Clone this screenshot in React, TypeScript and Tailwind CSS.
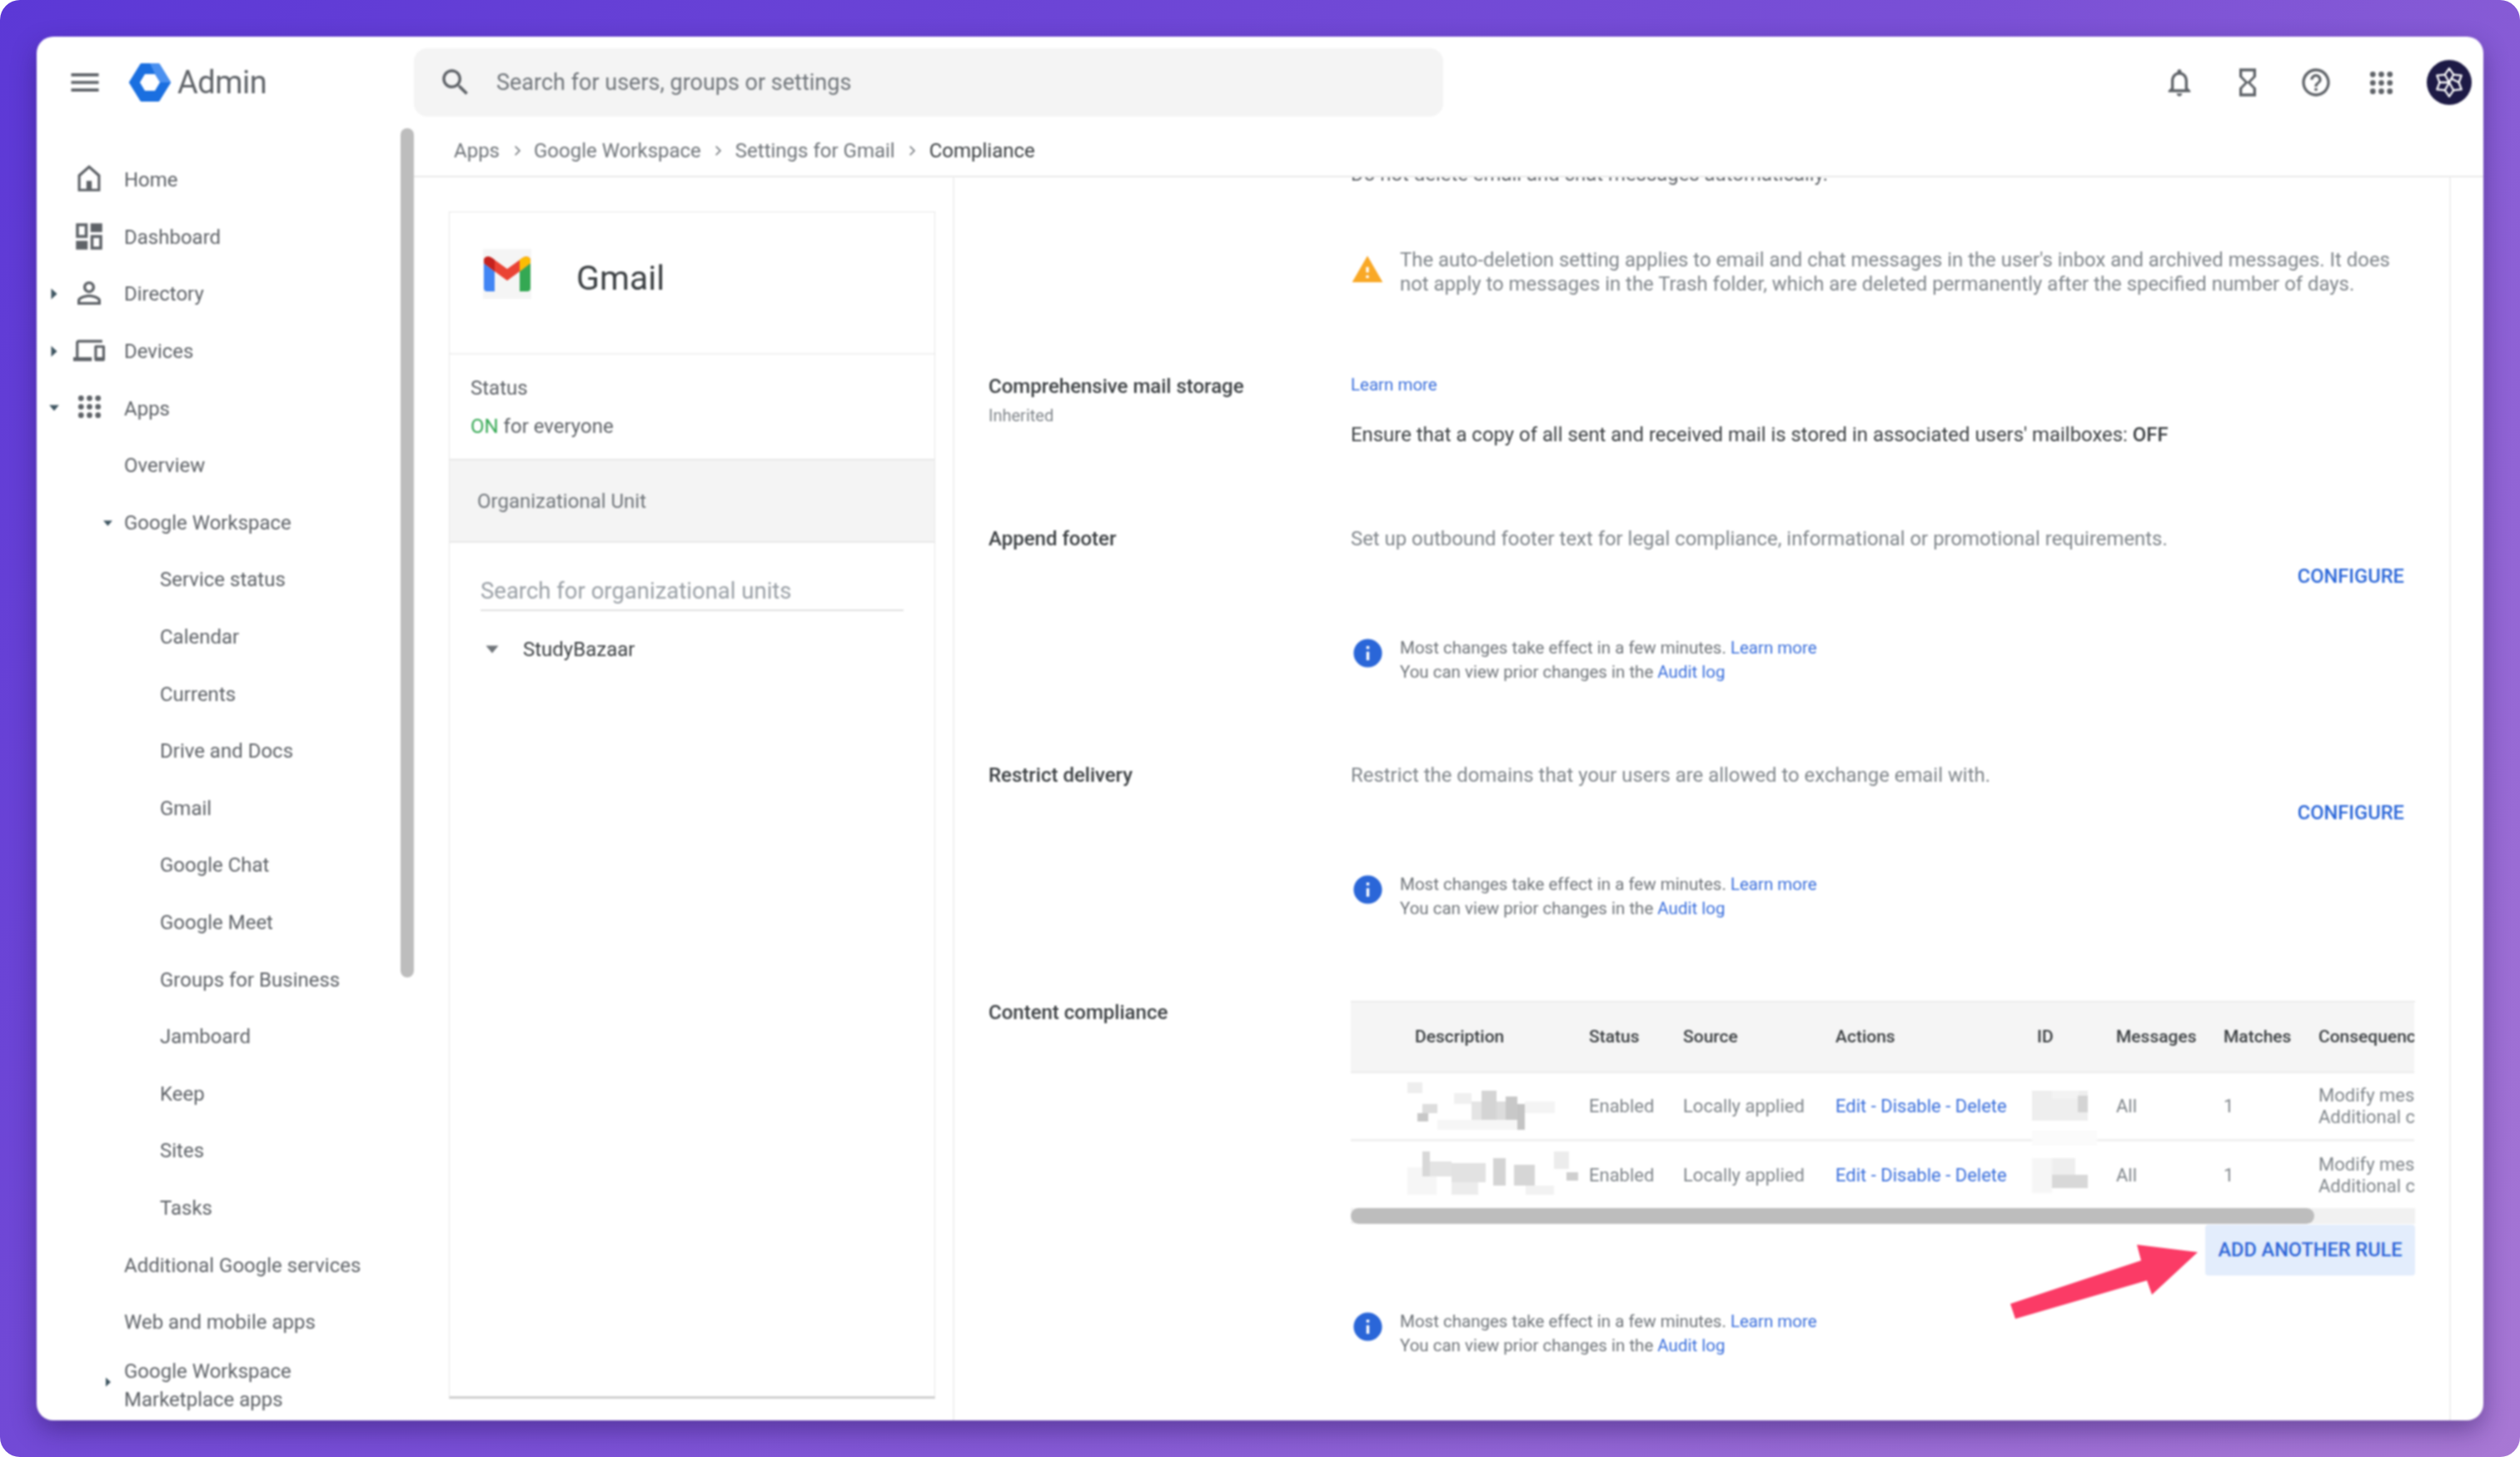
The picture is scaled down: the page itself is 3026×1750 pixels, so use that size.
import React from 'react';

const icons: Record<string, string> = {
  menu: 'M3 18h18v-2H3v2zm0-5h18v-2H3v2zm0-7v2h18V6H3z',
  search: 'M15.5 14h-.79l-.28-.27C15.41 12.59 16 11.11 16 9.5 16 5.91 13.09 3 9.5 3S3 5.91 3 9.5 5.91 16 9.5 16c1.61 0 3.09-.59 4.23-1.57l.27.28v.79l5 4.99L20.49 19l-4.99-5zm-6 0C7.01 14 5 11.99 5 9.5S7.01 5 9.5 5 14 7.01 14 9.5 11.99 14 9.5 14z',
  bell: 'M12 22c1.1 0 2-.9 2-2h-4c0 1.1.9 2 2 2zm6-6v-5c0-3.07-1.63-5.64-4.5-6.32V4c0-.83-.67-1.5-1.5-1.5s-1.5.67-1.5 1.5v.68C7.64 5.36 6 7.92 6 11v5l-2 2v1h16v-1l-2-2zm-2 1H8v-6c0-2.48 1.51-4.5 4-4.5s4 2.02 4 4.5v6z',
  hourglass: 'M6 2v6h.01L6 8.01 10 12l-4 4 .01.01H6V22h12v-5.99h-.01L18 16l-4-4 4-3.99-.01-.01H18V2H6zm10 14.5V20H8v-3.5l4-4 4 4zm-4-5l-4-4V4h8v3.5l-4 4z',
  help: 'M11 18h2v-2h-2v2zm1-16C6.48 2 2 6.48 2 12s4.48 10 10 10 10-4.48 10-10S17.52 2 12 2zm0 18c-4.41 0-8-3.59-8-8s3.59-8 8-8 8 3.59 8 8-3.59 8-8 8zm0-14c-2.21 0-4 1.79-4 4h2c0-1.1.9-2 2-2s2 .9 2 2c0 2-3 1.75-3 5h2c0-2.25 3-2.5 3-5 0-2.21-1.79-4-4-4z',
  home: 'M12 2L3.5 9.5V22h17V9.5L12 2zM12 4.8l6.5 5.7V20h-13v-9.5L12 4.8zM10 14h4v6h-4z',
  dashboard: 'M13 3h8v6h-8zM3 15h8v6H3zM11 3H3v10h8V3zM9 5v6H5V5h4zM21 11h-8v10h8V11zM19 13v6h-4v-6h4z',
  person: 'M12 5.9c1.16 0 2.1.94 2.1 2.1s-.94 2.1-2.1 2.1S9.9 9.16 9.9 8s.94-2.1 2.1-2.1m0 9c2.97 0 6.1 1.46 6.1 2.1v1.1H5.9V17c0-.64 3.13-2.1 6.1-2.1M12 4C9.79 4 8 5.79 8 8s1.79 4 4 4 4-1.79 4-4-1.79-4-4-4zm0 9c-2.67 0-8 1.34-8 4v3h16v-3c0-2.66-5.33-4-8-4z',
  devices: 'M4 6h18V4H4c-1.1 0-2 .9-2 2v11H0v3h14v-3H4V6zm19 2h-6c-.55 0-1 .45-1 1v10c0 .55.45 1 1 1h6c.55 0 1-.45 1-1V9c0-.55-.45-1-1-1zm-1 9h-4v-7h4v7z',
  warning: 'M1 21h22L12 2 1 21zm12-3h-2v-2h2v2zm0-4h-2v-4h2v4z',
  info: 'M12 2C6.48 2 2 6.48 2 12s4.48 10 10 10 10-4.48 10-10S17.52 2 12 2zm1 15h-2v-6h2v6zm0-8h-2V7h2v2z',
};

function Icon({ name, className }: { name: string; className?: string }) {
  return (
    <svg viewBox="0 0 24 24" className={className} fill="currentColor" fillRule="evenodd">
      <path d={icons[name]} />
    </svg>
  );
}

function DotsIcon({ className }: { className?: string }) {
  const spots = [5, 12, 19];
  return (
    <svg viewBox="0 0 24 24" className={className} fill="currentColor">
      {spots.map((y) => spots.map((x) => <circle key={`${x}-${y}`} cx={x} cy={y} r="2.3" />))}
    </svg>
  );
}

function AdminLogo() {
  return (
    <svg viewBox="0 0 50 48" className="h-[48px] w-[50px] shrink-0">
      <path d="M15 3h20l13 21-13 21H15L2 24z" fill="#1a6fe0" stroke="#1a6fe0" strokeWidth="4" strokeLinejoin="round" />
      <path d="M25 1h10c1 0 2 1 2.5 2L49 22c.5 1 .5 3 0 2H36z" fill="#4a90f0" />
      <path d="M19 14h12l6 10-6 10H19l-6-10z" fill="#fff" />
    </svg>
  );
}

function GmailLogo() {
  return (
    <div className="flex h-[60px] w-[58px] shrink-0 items-center justify-center bg-[#f5f5f5]">
      <svg viewBox="0 0 56 42" className="h-[42px] w-[56px]">
        <path d="M0 8l13 10v24H4a4 4 0 0 1-4-4z" fill="#4285f4" />
        <path d="M56 8L43 18v24h9a4 4 0 0 0 4-4z" fill="#34a853" />
        <path d="M0 5c0-5 6-6 10-3l18 13L46 2c4-3 10-2 10 3v3L43 18 28 29 13 18 0 8z" fill="#ea4335" />
        <path d="M0 5c0-5 6-6 10-3l3 2v14L0 8z" fill="#c5221f" />
        <path d="M56 5c0-5-6-6-10-3l-3 2v14L56 8z" fill="#fbbc04" />
      </svg>
    </div>
  );
}

function Avatar() {
  return (
    <div className="flex h-[54px] w-[54px] shrink-0 items-center justify-center rounded-full bg-[#1d1a45]">
      <svg viewBox="0 0 40 40" className="h-[42px] w-[42px]" fill="none" stroke="#fff" strokeWidth="2.2" strokeLinejoin="round">
        <path d="M20 4l5 7 9 1-3 8 3 8-9 1-5 7-5-7-9-1 3-8-3-8 9-1z" />
        <path d="M15 11l10 18M25 11L15 29M9 20h10M23 16l8 4" />
      </svg>
    </div>
  );
}

function Caret({ down, className }: { down?: boolean; className?: string }) {
  return (
    <svg viewBox="0 0 12 12" className={className} fill="#3f5662">
      <path d={down ? 'M1 3h10L6 9z' : 'M3 0.5v11L9 6z'} />
    </svg>
  );
}

type NavItem = { label: string; level: number; icon?: string; caret?: 'right' | 'down' };

const nav: NavItem[] = [
  { label: 'Home', level: 0, icon: 'home' },
  { label: 'Dashboard', level: 0, icon: 'dashboard' },
  { label: 'Directory', level: 0, icon: 'person', caret: 'right' },
  { label: 'Devices', level: 0, icon: 'devices', caret: 'right' },
  { label: 'Apps', level: 0, icon: 'dots', caret: 'down' },
  { label: 'Overview', level: 1 },
  { label: 'Google Workspace', level: 1, caret: 'down' },
  { label: 'Service status', level: 2 },
  { label: 'Calendar', level: 2 },
  { label: 'Currents', level: 2 },
  { label: 'Drive and Docs', level: 2 },
  { label: 'Gmail', level: 2 },
  { label: 'Google Chat', level: 2 },
  { label: 'Google Meet', level: 2 },
  { label: 'Groups for Business', level: 2 },
  { label: 'Jamboard', level: 2 },
  { label: 'Keep', level: 2 },
  { label: 'Sites', level: 2 },
  { label: 'Tasks', level: 2 },
  { label: 'Additional Google services', level: 1 },
  { label: 'Web and mobile apps', level: 1 },
];

const navIconSize: Record<string, string> = {
  home: 'left-[44px] top-[13px] h-[38px] w-[38px]',
  dashboard: 'left-[42px] top-[12px] h-[42px] w-[42px]',
  person: 'left-[42px] top-[12px] h-[42px] w-[42px]',
  devices: 'left-[44px] top-[14px] h-[38px] w-[38px]',
};

function NavRow({ item }: { item: NavItem }) {
  return (
    <div className="relative flex h-[68.6px] items-center text-[24px] text-[#5f6368]">
      {item.caret && item.level === 0 && (
        <Caret down={item.caret === 'down'} className="absolute left-[14px] top-[27px] h-[14px] w-[14px]" />
      )}
      {item.caret && item.level === 1 && <Caret down className="absolute left-[79px] top-[28px] h-[13px] w-[13px]" />}
      {item.icon === 'dots' && <DotsIcon className="absolute left-[46px] top-[15px] h-[35px] w-[35px] text-[#5f6368]" />}
      {item.icon && item.icon !== 'dots' && (
        <Icon name={item.icon} className={`absolute text-[#5f6368] ${navIconSize[item.icon]}`} />
      )}
      <span className={item.level === 2 ? 'pl-[148px]' : 'pl-[105px]'}>{item.label}</span>
    </div>
  );
}

function Sidebar() {
  return (
    <aside className="relative w-[453px] shrink-0 overflow-hidden pt-[32px]">
      <div className="absolute right-0 top-[4px] h-[1020px] w-[16px] rounded-full bg-[#bdbdbd]" />
      {nav.map((item) => (
        <NavRow key={item.label} item={item} />
      ))}
      <div className="relative pl-[105px] pt-[8px] text-[24px] leading-[34px] text-[#5f6368]">
        <Caret className="absolute left-[80px] top-[32px] h-[12px] w-[12px]" />
        Google Workspace
        <br />
        Marketplace apps
      </div>
    </aside>
  );
}

function TopBar() {
  return (
    <header className="flex h-[106px] shrink-0 items-center pt-[4px]">
      <div className="flex w-[453px] shrink-0 items-center">
        <Icon name="menu" className="ml-[36px] h-[44px] w-[44px] text-[#5f6368]" />
        <div className="ml-[31px]">
          <AdminLogo />
        </div>
        <span className="ml-[8px] text-[38px] tracking-[-0.5px] text-[#5f6368]">Admin</span>
      </div>
      <div className="flex h-[82px] w-[1236px] items-center rounded-[16px] bg-[#f4f4f4] pl-[29px]">
        <Icon name="search" className="h-[42px] w-[42px] text-[#5f6368]" />
        <span className="ml-[28px] text-[27px] text-[#70757a]">Search for users, groups or settings</span>
      </div>
      <div className="ml-auto mr-[14px] flex items-center gap-[42px] text-[#5f6368]">
        <Icon name="bell" className="h-[40px] w-[40px]" />
        <Icon name="hourglass" className="h-[40px] w-[40px]" />
        <Icon name="help" className="h-[40px] w-[40px]" />
        <DotsIcon className="-ml-[1px] -mr-[4.5px] h-[35px] w-[35px]" />
        <Avatar />
      </div>
    </header>
  );
}

function Breadcrumbs() {
  const parts = ['Apps', 'Google Workspace', 'Settings for Gmail'];
  return (
    <nav className="flex h-[63px] shrink-0 items-center border-b-2 border-[#ebebeb] pl-[48px] text-[24px] text-[#70757a]">
      {parts.map((part) => (
        <React.Fragment key={part}>
          <span>{part}</span>
          <svg viewBox="0 0 12 12" className="mx-[13.5px] h-[14px] w-[14px]" fill="none" stroke="#70757a" strokeWidth="1.4">
            <path d="M4 1.5L8.5 6 4 10.5" />
          </svg>
        </React.Fragment>
      ))}
      <span className="text-[#3c4043]">Compliance</span>
    </nav>
  );
}

function OrgCard() {
  return (
    <div className="w-[649px] shrink-0 border-r-2 border-[#efefef] pl-[42px] pr-[21px] pt-[41px]">
      <div className="h-[1426px] border border-b-[3px] border-[#e6e6e6] border-b-[#d0d0d0]">
        <div className="flex h-[171px] items-start border-b-2 border-[#f1f1f1] pl-[40px] pt-[44px]">
          <GmailLogo />
          <span className="ml-[54px] mt-[5px] text-[41px] leading-[60px] text-[#3c4043]">Gmail</span>
        </div>
        <div className="h-[125px] pl-[25px] pt-[17px] text-[24px] leading-[46px] text-[#5f6368]">
          <div>Status</div>
          <div>
            <span className="text-[#34a853]">ON</span> for everyone
          </div>
        </div>
        <div className="flex h-[101px] items-center border-y-2 border-[#e9e9e9] bg-[#f4f4f4] pl-[33px] text-[24px] text-[#70757a]">
          Organizational Unit
        </div>
        <div className="mx-[37px] mt-[36px] h-[46px] border-b-2 border-[#e0e0e0] text-[27.5px] leading-[44px] text-[#9aa0a6]">
          Search for organizational units
        </div>
        <div className="mt-[24px] flex items-center pl-[42px] text-[24px] leading-[44px] text-[#3c4043]">
          <Caret down className="h-[18px] w-[18px] [&>path]:fill-[#70757a]" />
          <span className="ml-[28px]">StudyBazaar</span>
        </div>
      </div>
    </div>
  );
}

function InfoNote({ className }: { className?: string }) {
  return (
    <div className={`flex ${className ?? ''}`}>
      <Icon name="info" className="h-[41px] w-[41px] shrink-0 text-[#2a66d8]" />
      <div className="ml-[18px] text-[20.5px] leading-[29px] text-[#70757a]">
        <div>
          Most changes take effect in a few minutes. <span className="text-[#3a6fdc]">Learn more</span>
        </div>
        <div>
          You can view prior changes in the <span className="text-[#3a6fdc]">Audit log</span>
        </div>
      </div>
    </div>
  );
}

function ConfigSection({ label, text, className }: { label: string; text: string; className?: string }) {
  return (
    <section className={`grid grid-cols-[435px_1fr] ${className ?? ''}`}>
      <div className="text-[24px] font-medium leading-[30px] text-[#3c4043]">{label}</div>
      <div>
        <div className="text-[23.9px] leading-[30px] text-[#80868b]">{text}</div>
        <div className="mt-[15px] pr-[13px] text-right text-[23.7px] font-medium leading-[30px] text-[#2a66d8]">CONFIGURE</div>
        <InfoNote className="mt-[57px]" />
      </div>
    </section>
  );
}

const tableCols = 'grid grid-cols-[77px_209px_113px_183px_242px_95px_129px_114px_240px] items-center';

type Block = [number, number, number, number, string];

// blurred-out descriptions and ids from the screenshot
const pixelsA: Block[] = [
  [0, 0, 18, 13, '#eeeeee'], [18, 26, 18, 11, '#dddddd'], [12, 37, 13, 10, '#c8c8c8'], [56, 13, 21, 13, '#f0f0f0'],
  [36, 45, 96, 12, '#f6f6f6'], [77, 23, 14, 22, '#e4e4e4'], [89, 10, 18, 35, '#d4d4d4'], [107, 23, 11, 22, '#dcdcdc'],
  [118, 17, 14, 28, '#c8c8c8'], [132, 26, 9, 31, '#c4c4c4'], [141, 23, 36, 14, '#f4f4f4'],
];
const pixelsB: Block[] = [
  [0, 19, 35, 33, '#f6f6f6'], [18, 0, 9, 30, '#d8d8d8'], [27, 12, 26, 18, '#e4e4e4'], [53, 14, 41, 23, '#e2e2e2'],
  [53, 37, 32, 15, '#ececec'], [103, 8, 15, 33, '#d4d4d4'], [128, 16, 25, 25, '#d6d6d6'], [142, 41, 34, 11, '#f2f2f2'],
  [176, 0, 18, 21, '#ececec'], [191, 25, 14, 10, '#cfcfcf'],
];
const pixelsC: Block[] = [
  [0, 2, 67, 36, '#eeeeee'], [24, 2, 32, 10, '#f3f3f3'], [55, 8, 12, 20, '#d4d4d4'],
];
const pixelsD: Block[] = [
  [0, -33, 78, 18, '#fbfbfb'], [0, 0, 24, 42, '#f6f6f6'], [24, 0, 28, 20, '#eeeeee'], [24, 20, 43, 16, '#d8d8d8'],
];

function Pixels({ blocks, w, h, className }: { blocks: Block[]; w: number; h: number; className?: string }) {
  return (
    <svg viewBox={`0 0 ${w} ${h}`} width={w} height={h} className={`overflow-visible ${className ?? ''}`}>
      {blocks.map(([x, y, bw, bh, fill], i) => (
        <rect key={i} x={x} y={y} width={bw} height={bh} fill={fill} />
      ))}
    </svg>
  );
}

function RuleRow({ top, blocks, bw, idBlocks }: { top: boolean; blocks: Block[]; bw: number; idBlocks: Block[] }) {
  return (
    <div className={`${tableCols} h-[82px] text-[22px] leading-[26px] text-[#80868b] ${top ? 'border-b-[3px] border-[#f0f0f0]' : ''}`}>
      <div />
      <div>
        <Pixels blocks={blocks} w={bw} h={58} className="-ml-[9px]" />
      </div>
      <div>Enabled</div>
      <div>Locally applied</div>
      <div className="text-[#3a6fdc]">Edit - Disable - Delete</div>
      <div>
        <Pixels blocks={idBlocks} w={70} h={42} className="-ml-[6px]" />
      </div>
      <div>All</div>
      <div>1</div>
      <div className="whitespace-nowrap">
        Modify messages
        <br />
        Additional content
      </div>
    </div>
  );
}

function ComplianceTable() {
  return (
    <div className="overflow-hidden border-t-2 border-[#ececec]">
      <div className="w-[1277px] overflow-hidden">
        <div className={`${tableCols} h-[85px] border-b-2 border-[#ececec] bg-[#f5f5f5] text-[21px] font-medium text-[#3c4043]`}>
          <div />
          <div>Description</div>
          <div>Status</div>
          <div>Source</div>
          <div>Actions</div>
          <div>ID</div>
          <div>Messages</div>
          <div>Matches</div>
          <div className="whitespace-nowrap">Consequences</div>
        </div>
        <RuleRow top blocks={pixelsA} bw={178} idBlocks={pixelsC} />
        <RuleRow top={false} blocks={pixelsB} bw={204} idBlocks={pixelsD} />
      </div>
      <div className="-mt-[2px] h-[19px] bg-[#f1f1f1]">
        <div className="h-full w-[1157px] rounded-full bg-[#bdbdbd]" />
      </div>
    </div>
  );
}

function SettingsPanel() {
  return (
    <div className="w-[1797px] shrink-0 overflow-hidden border-r-2 border-[#efefef] pl-[41px] pr-[41px]">
      <div className="pl-[435px]">
        <div className="-mt-[18px] text-[23.9px] leading-[28px] text-[#5f6368]">Do not delete email and chat messages automatically.</div>
        <div className="mt-[75px] flex">
          <Icon name="warning" className="mt-[6px] h-[40px] w-[40px] shrink-0 text-[#f9a825]" />
          <p className="ml-[19px] text-[23.9px] leading-[28.5px] text-[#80868b]">
            The auto-deletion setting applies to email and chat messages in the user's inbox and archived messages. It does not apply to messages in the Trash folder, which are deleted permanently after the specified number of days.
          </p>
        </div>
      </div>

      <section className="mt-[94px] grid grid-cols-[435px_1fr]">
        <div>
          <div className="text-[24px] font-medium leading-[30px] text-[#3c4043]">Comprehensive mail storage</div>
          <div className="mt-[8px] text-[20px] leading-[24px] text-[#80868b]">Inherited</div>
        </div>
        <div>
          <div className="pt-[1px] text-[20.5px] leading-[24px] text-[#3a6fdc]">Learn more</div>
          <div className="mt-[33px] text-[23.9px] leading-[30px] text-[#3c4043]">
            Ensure that a copy of all sent and received mail is stored in associated users' mailboxes: <span className="font-medium">OFF</span>
          </div>
        </div>
      </section>

      <ConfigSection
        className="mt-[95px]"
        label="Append footer"
        text="Set up outbound footer text for legal compliance, informational or promotional requirements."
      />
      <ConfigSection
        className="mt-[94px]"
        label="Restrict delivery"
        text="Restrict the domains that your users are allowed to exchange email with."
      />

      <section className="mt-[95px] grid grid-cols-[435px_1fr]">
        <div className="text-[24px] font-medium leading-[30px] text-[#3c4043]">Content compliance</div>
        <div className="min-w-0">
          <div className="pt-[1px]">
            <ComplianceTable />
          </div>
          <div className="relative flex justify-end">
            <svg viewBox="0 0 225 89" className="absolute right-[261px] top-[25px] h-[89px] w-[225px]" fill="#fb3b66">
              <path d="M152 0l73 9-55 51-6-17L6 89 0 71l157-52z" />
            </svg>
            <div className="mt-[1px] flex h-[61px] w-[252px] items-center justify-center rounded-[4px] bg-[#e3edfc] text-[23.5px] font-medium text-[#2f66d8]">
              ADD ANOTHER RULE
            </div>
          </div>
          <InfoNote className="mt-[41px]" />
        </div>
      </section>
    </div>
  );
}

export default function App() {
  return (
    <div className="h-[1750px] w-[3026px] overflow-hidden bg-white font-['Roboto',sans-serif]">
      <div className="h-full rounded-[24px] bg-[linear-gradient(135deg,#5c38d6_0%,#7a50d6_50%,#a878d4_100%)] p-[44px]">
        <div className="flex h-[1662px] flex-col overflow-hidden rounded-[20px] bg-white shadow-[0_12px_30px_rgba(40,20,90,0.45)] blur-[0.8px]">
          <TopBar />
          <div className="flex min-h-0 flex-1">
            <Sidebar />
            <main className="flex min-w-0 flex-1 flex-col">
              <Breadcrumbs />
              <div className="flex min-h-0 flex-1">
                <OrgCard />
                <SettingsPanel />
              </div>
            </main>
          </div>
        </div>
      </div>
    </div>
  );
}
